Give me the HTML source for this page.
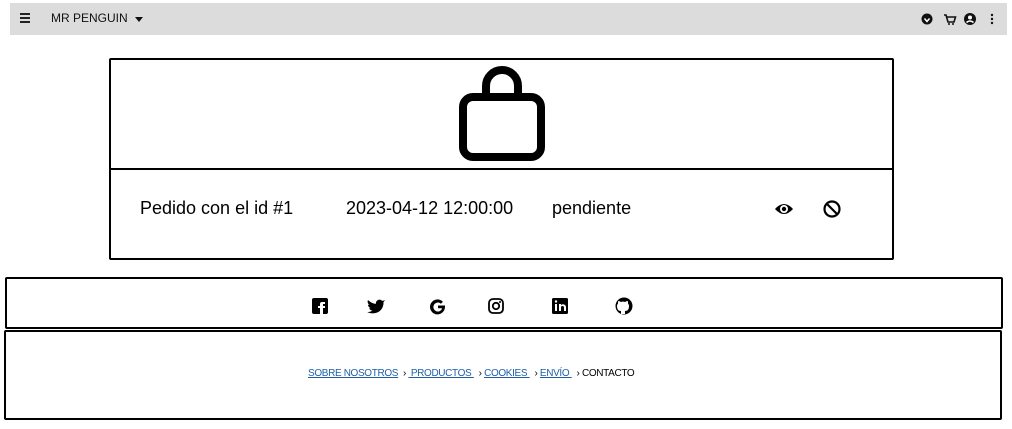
<!DOCTYPE html>
<html><head><style>
body{margin:0;width:1012px;height:429px;background:#fff;font-family:"Liberation Sans",sans-serif;position:relative;overflow:hidden}
.abs{position:absolute}
.nav{left:10px;top:3px;width:997px;height:32px;background:#dcdcdc}
.box{border:2px solid #000;box-sizing:border-box;border-radius:2px}
a{color:#1f5fa8;text-decoration:underline}
</style></head><body>
<div class="abs nav"></div>
<div class="abs" style="left:20px;top:13px;width:10px;height:1.5px;background:#222;box-shadow:0 4px #222,0 8px #222"></div>
<div class="abs" style="left:51px;top:11px;font-size:12px;color:#111">MR PENGUIN</div>
<div class="abs" style="left:135px;top:17px;border-left:4px solid transparent;border-right:4px solid transparent;border-top:5px solid #111"></div>
<svg class="abs" style="left:920px;top:12px" width="80" height="14">
<circle cx="7" cy="7" r="5.5" fill="#111"/><path d="M4.5 6.5 7 9.5 9.5 6.5" stroke="#fff" stroke-width="1.5" fill="none"/>
<path d="M24 3h2l2 7h6l1.5-5H27" stroke="#111" stroke-width="1.6" fill="none"/><circle cx="29" cy="12" r="1" fill="#111"/><circle cx="33" cy="12" r="1" fill="#111"/>
<circle cx="50" cy="7" r="6" fill="#111"/><circle cx="50" cy="5.5" r="2" fill="#fff"/><path d="M46.5 10.5q3.5-3 7 0" stroke="#fff" stroke-width="1.5" fill="none"/>
<circle cx="72" cy="3" r="1.2" fill="#111"/><circle cx="72" cy="7" r="1.2" fill="#111"/><circle cx="72" cy="11" r="1.2" fill="#111"/>
</svg>
<div class="abs box" style="left:109px;top:58px;width:785px;height:202px"></div>
<div class="abs" style="left:110px;top:168px;width:783px;height:2px;background:#000"></div>
<svg class="abs" style="left:458px;top:64px" width="88" height="98">
<path d="M28 32V22a16 16 0 0 1 32 0v10" stroke="#000" stroke-width="8" fill="none"/>
<rect x="5" y="33" width="78" height="60" rx="10" stroke="#000" stroke-width="8" fill="none"/>
</svg>
<div class="abs" style="left:140px;top:198px;font-size:18px">Pedido con el id #1</div>
<div class="abs" style="left:346px;top:198px;font-size:18px">2023-04-12 12:00:00</div>
<div class="abs" style="left:552px;top:198px;font-size:18px">pendiente</div>
<svg class="abs" style="left:774px;top:199px" width="70" height="20">
<path d="M1 10Q10 0 19 10Q10 20 1 10Z" fill="#000"/><circle cx="10" cy="10" r="4" fill="#fff"/><circle cx="10" cy="10" r="2.2" fill="#000"/>
<circle cx="58" cy="10" r="7.5" stroke="#000" stroke-width="2.2" fill="none"/><path d="M53 5l10 10" stroke="#000" stroke-width="2.2"/>
</svg>
<div class="abs box" style="left:5px;top:277px;width:998px;height:52px"></div>
<svg class="abs" style="left:310px;top:296px" width="330" height="20">
<rect x="2" y="2" width="16" height="16" rx="2" fill="#000"/><path d="M13 18v-6h2v-2h-2V8h2V6h-3a2 2 0 0 0-2 2v2H8v2h2v6z" fill="#fff"/>
<g transform="translate(18,-1)"><path d="M57 5c-1 .5-2 .8-3 .8a3.5 3.5 0 0 0-6 3C45 8.8 42 7 40 5c-1 2 0 4 1.5 5-.6 0-1.2-.2-1.5-.4 0 1.7 1.2 3 2.8 3.4-.5.1-1 .2-1.6.1.4 1.4 1.8 2.4 3.3 2.4A7 7 0 0 1 39 17c8 4 17-1 16.5-10C56 6.5 56.6 5.8 57 5z" fill="#000"/></g>
<path d="M135 9.5h-7v2.8h4.2a4.5 4.5 0 1 1-1.3-4.6l2-2A7.5 7.5 0 1 0 135 11z" fill="#000"/>
<rect x="179" y="3" width="14" height="14" rx="4" stroke="#000" stroke-width="1.8" fill="none"/><circle cx="186" cy="10" r="3.2" stroke="#000" stroke-width="1.8" fill="none"/><circle cx="190" cy="6" r="1" fill="#000"/>
<rect x="242" y="2" width="16" height="16" rx="1.5" fill="#000"/><rect x="245" y="8" width="2" height="7" fill="#fff"/><circle cx="246" cy="5.5" r="1.2" fill="#fff"/><path d="M249 15V8h2v1a3 3 0 0 1 5 2v4h-2v-3.5a1.5 1.5 0 0 0-3 0V15z" fill="#fff"/>
<circle cx="314" cy="10" r="8.5" fill="#000"/><path d="M311 18v-3c-3 0-4-2-4-5 0-1 .5-2 1-2.5 0-1 0-2 .3-2.5 1 0 2 .5 2.5 1a8 8 0 0 1 4.4 0c.5-.5 1.5-1 2.5-1 .3.5.3 1.5.3 2.5.5.5 1 1.5 1 2.5 0 3-1 5-4 5v3z" fill="#fff"/>
</svg>
<div class="abs box" style="left:4px;top:330px;width:998px;height:90px"></div>
<div class="abs" style="left:308px;top:368px;font-size:10px;color:#000;white-space:nowrap;letter-spacing:-0.35px"><a>SOBRE NOSOTROS</a> &nbsp;›&nbsp;<a>&nbsp;PRODUCTOS&nbsp;</a> &nbsp;›&nbsp;<a>COOKIES&nbsp;</a> &nbsp;›&nbsp;<a>ENVÍO&nbsp;</a> &nbsp;› CONTACTO</div>
</body></html>
